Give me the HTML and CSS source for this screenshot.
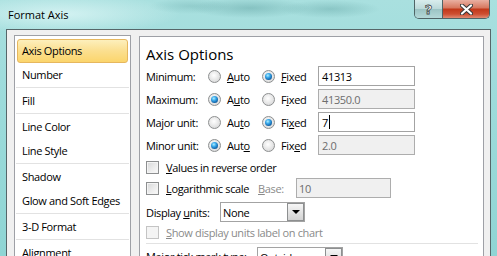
FILE: index.html
```html
<!DOCTYPE html>
<html lang="en">
<head>
  <meta charset="UTF-8">
  <title>Format Axis</title>
  <link rel="stylesheet" href="styles.css">
</head>
<body>
  <div class="window">
    <div class="titlebar">
      <span class="title">Format Axis</span>
      <div class="caption-buttons">
        <div class="cap-btn help">?</div>
        <div class="cap-btn close">
          <svg width="13" height="11" viewBox="0 0 13 11">
            <path d="M2 1.5 L11 9.5 M11 1.5 L2 9.5" stroke="#3b3b3b" stroke-width="4.2" stroke-linecap="round"/>
            <path d="M2 1.5 L11 9.5 M11 1.5 L2 9.5" stroke="#ffffff" stroke-width="2.2" stroke-linecap="round"/>
          </svg>
        </div>
      </div>
    </div>

    <div class="client">
      <!-- category list -->
      <ul class="nav">
        <li class="selected">Axis Options</li>
        <li>Number</li>
        <li class="sep"></li>
        <li>Fill</li>
        <li class="sep"></li>
        <li>Line Color</li>
        <li>Line Style</li>
        <li class="sep"></li>
        <li>Shadow</li>
        <li>Glow and Soft Edges</li>
        <li class="sep"></li>
        <li>3-D Format</li>
        <li class="sep"></li>
        <li>Alignment</li>
      </ul>

      <div class="panel">
        <h2>Axis Options</h2>

        <div class="axis-row">
          <span class="row-label">Minimum:</span>
          <span class="opt opt-auto"><span class="radio"></span><span><u>A</u>uto</span></span>
          <span class="opt opt-fixed"><span class="radio checked"></span><span><u>F</u>ixed</span></span>
          <span class="field">41313</span>
        </div>
        <div class="axis-row">
          <span class="row-label">Maximum:</span>
          <span class="opt opt-auto"><span class="radio checked"></span><span>A<u>u</u>to</span></span>
          <span class="opt opt-fixed"><span class="radio"></span><span>F<u>i</u>xed</span></span>
          <span class="field disabled">41350.0</span>
        </div>
        <div class="axis-row">
          <span class="row-label">Major unit:</span>
          <span class="opt opt-auto"><span class="radio"></span><span>Au<u>t</u>o</span></span>
          <span class="opt opt-fixed"><span class="radio checked"></span><span>Fi<u>x</u>ed</span></span>
          <span class="field">7<span class="caret"></span></span>
        </div>
        <div class="axis-row last">
          <span class="row-label">Minor unit:</span>
          <span class="opt opt-auto"><span class="radio checked"></span><span>Aut<u>o</u></span></span>
          <span class="opt opt-fixed"><span class="radio"></span><span>Fix<u>e</u>d</span></span>
          <span class="field disabled">2.0</span>
        </div>

        <div class="check-row reverse">
          <span class="check"></span><span><u>V</u>alues in reverse order</span>
        </div>
        <div class="check-row log">
          <span class="check"></span><span class="log-label"><u>L</u>ogarithmic scale</span>
          <span class="base-label"><u>B</u>ase:</span>
          <span class="field disabled base">10</span>
        </div>
        <div class="check-row units">
          <span class="units-label">Display <u>u</u>nits:</span>
          <span class="select units-select">None<span class="drop"></span></span>
        </div>
        <div class="check-row show">
          <span class="check disabled"></span><span class="muted"><u>S</u>how display units label on chart</span>
        </div>

        <div class="divider"></div>

        <div class="check-row tick">
          <span class="tick-label">Major tick mark type:</span>
          <span class="select tick-select">Outside<span class="drop"></span></span>
        </div>
      </div>
    </div>
  </div>
</body>
</html>
```

FILE: styles.css
```css
body {
  margin: 0;
  font-family: "Open Sans", sans-serif;
  font-size: 11px;
  letter-spacing: -0.35px;
  color: #000;
}

.window {
  width: 497px;
  height: 256px;
  overflow: hidden;
  box-sizing: border-box;
  padding: 0 6px;
  display: flex;
  flex-direction: column;
  background:
    radial-gradient(ellipse 60px 10px at 250px 8px, rgba(70, 140, 140, 0.35), transparent),
    radial-gradient(ellipse 50px 9px at 330px 9px, rgba(70, 140, 140, 0.3), transparent),
    radial-gradient(ellipse 40px 8px at 190px 6px, rgba(80, 150, 150, 0.25), transparent),
    radial-gradient(ellipse 120px 20px at 60px 14px, rgba(230, 250, 250, 0.7), transparent),
    linear-gradient(to bottom, #a9e0df 0%, #9fdcdc 30%, #8fd5d4 100%);
}

.titlebar {
  height: 29px;
  display: flex;
  flex-shrink: 0;
}

.title {
  padding-left: 2px;
  line-height: 29px;
  font-size: 11px;
  letter-spacing: 0;
}

.caption-buttons {
  margin-left: auto;
  margin-right: 1px;
  height: 19px;
  display: flex;
  border: 1px solid #4f6466;
  border-top: none;
  border-radius: 0 0 5px 5px;
  overflow: hidden;
  box-sizing: border-box;
}

.cap-btn {
  height: 18px;
  display: flex;
  align-items: center;
  justify-content: center;
}

.help {
  width: 27px;
  border-right: 1px solid #4f6466;
  background: linear-gradient(to bottom, #d9eded 0%, #bcd9d9 48%, #9cc4c4 52%, #b4d8d8 100%);
  color: #fff;
  font-family: "DejaVu Sans", sans-serif;
  font-weight: bold;
  font-size: 13px;
  letter-spacing: 0;
  -webkit-text-stroke: 0.8px #404848;
}

.close {
  width: 46px;
  background: linear-gradient(to bottom, #e9b0a2 0%, #d77a62 42%, #c2391b 52%, #cd4e31 78%, #e08a72 100%);
}

.client {
  flex: 1;
  display: flex;
  gap: 8px;
  padding: 5px 6px 0 7px;
  background: #f0f0f0;
  border: 1px solid #566669;
  border-bottom: none;
}

.nav {
  list-style: none;
  margin: 0;
  width: 117px;
  flex-shrink: 0;
  box-sizing: border-box;
  padding: 3px 2px;
  background: #fff;
  border: 1px solid #9ea0a6;
}

.nav li {
  height: 24px;
  line-height: 22px;
  padding: 0 4px;
  border: 1px solid transparent;
  box-sizing: border-box;
  white-space: nowrap;
}

.nav li.selected {
  border-color: #e6b75e;
  border-radius: 3px;
  background: linear-gradient(to bottom, #fdefbc 0%, #fbdf8f 50%, #fbd56c 100%);
}

.nav li.sep {
  height: 1px;
  padding: 0;
  border: none;
  margin: 0 -1px 1px;
  background: #e2e2e2;
}

.panel {
  flex: 1;
  margin-top: 1px;
  padding: 7px 5px 0 6px;
  background: #fff;
  border: 1px solid #9ea0a6;
}

h2 {
  margin: 0 0 2px;
  font-size: 15px;
  font-weight: normal;
  line-height: 20px;
  letter-spacing: 0;
}

.axis-row {
  display: flex;
  align-items: center;
  height: 20px;
  margin-bottom: 3px;
}

.axis-row.last {
  margin-bottom: 2px;
}

.row-label {
  width: 62px;
}

.opt {
  display: flex;
  align-items: center;
  gap: 6px;
}

.opt-auto {
  width: 54px;
}

.opt-fixed {
  width: 56px;
}

.radio {
  width: 13px;
  height: 13px;
  box-sizing: border-box;
  border: 1px solid #8d8f90;
  border-radius: 50%;
  background: radial-gradient(circle at 45% 40%, #ffffff 0%, #eaeaea 45%, #cfd0d1 100%);
  display: flex;
  align-items: center;
  justify-content: center;
  flex-shrink: 0;
}

.radio.checked::after {
  content: "";
  width: 7px;
  height: 7px;
  border-radius: 50%;
  background: radial-gradient(circle at 40% 35%, #aef0ff 0%, #38a7ea 35%, #0d5a9e 75%, #0a3f72 100%);
}

.field {
  width: 97px;
  height: 20px;
  box-sizing: border-box;
  border: 1px solid #a3a3a3;
  background: #fff;
  padding-left: 3px;
  display: flex;
  align-items: center;
}

.field.disabled {
  background: #f0f0f0;
  border-color: #adadad;
  color: #6d6d6d;
}

.caret {
  width: 1px;
  height: 14px;
  background: #000;
  margin-left: 1px;
}

.check-row {
  display: flex;
  align-items: center;
  height: 20px;
}

.check-row.log {
  margin-top: 1px;
}

.check-row.units {
  margin-top: 4px;
}

.check-row.tick {
  margin-top: 3px;
  align-items: flex-start;
}

.check {
  width: 13px;
  height: 13px;
  box-sizing: border-box;
  border: 1px solid #8d8f90;
  background: linear-gradient(135deg, #d6d7d8 0%, #ececec 55%, #fafafa 100%);
  box-shadow: inset 0 0 0 1px #f4f4f4;
  margin-right: 7px;
  flex-shrink: 0;
}

.check.disabled {
  border-color: #c4c4c4;
  background: #f4f4f4;
}

.log-label {
  width: 92px;
}

.base-label {
  width: 38px;
  color: #8a8a8a;
}

.field.base {
  width: 95px;
  padding-left: 2px;
}

.muted {
  color: #8a8a8a;
}

.units-label {
  width: 74px;
}

.select {
  height: 20px;
  box-sizing: border-box;
  border: 1px solid #a3a3a3;
  background: #fff;
  padding-left: 2px;
  display: flex;
  align-items: center;
}

.units-select {
  width: 85px;
}

.tick-label {
  width: 111px;
  padding-top: 2px;
}

.tick-select {
  width: 86px;
}

.drop {
  margin-left: auto;
  width: 17px;
  height: 18px;
  box-sizing: border-box;
  border: 1px solid #8d8f90;
  background: linear-gradient(to bottom, #f6f6f6 0%, #e4e4e4 50%, #d3d3d3 100%);
  display: flex;
  align-items: center;
  justify-content: center;
}

.drop::after {
  content: "";
  border-left: 4px solid transparent;
  border-right: 4px solid transparent;
  border-top: 4px solid #000;
}

.divider {
  height: 1px;
  background: #e2e2e2;
  margin-top: 1px;
}
```
